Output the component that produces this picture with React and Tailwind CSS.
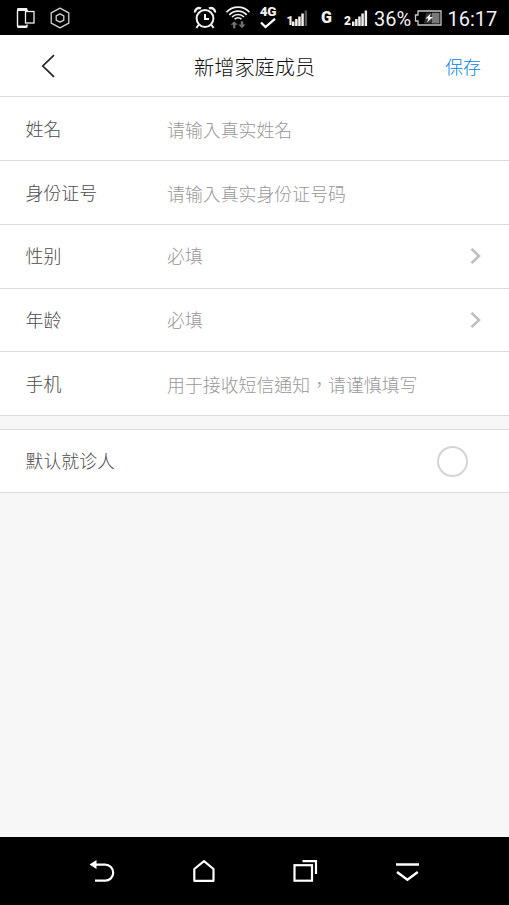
import React from 'react';

const FIELDS = [
  { label: '姓名', hint: '请输入真实姓名', input: true },
  { label: '身份证号', hint: '请输入真实身份证号码', input: true },
  { label: '性别', hint: '必填' },
  { label: '年龄', hint: '必填' },
  { label: '手机', hint: '用于接收短信通知，请谨慎填写', input: true },
];

const SignalBars = ({ dimLast }) => (
  <svg className="w-4 h-4 shrink-0" viewBox="0 0 16 16" fill="#f0f0f0">
    <rect x="0" y="11.5" width="2.5" height="4.5" />
    <rect x="3.1" y="9" width="2.5" height="7" />
    <rect x="6.2" y="6.5" width="2.5" height="9.5" />
    <rect x="9.3" y="3.5" width="2.5" height="12.5" />
    <rect x="12.6" y="0.5" width="2.5" height="15.5" fill={dimLast ? '#555' : '#f0f0f0'} />
  </svg>
);

const StatusBar = () => (
  <div className="h-[35px] shrink-0 bg-black text-[#f2f2f2] flex items-center pl-4 font-['Roboto',sans-serif]">
    {/* Notifications */}
    <svg className="w-5 h-[22px]" viewBox="0 0 20 22" fill="none" stroke="#f2f2f2">
      <path d="M11 4.5V3M11 17.5V19M1.5 3.5V19" strokeWidth="1.4" />
      <path d="M1 4V2.2Q1 1 2.2 1H10.3Q11.5 1 11.5 2.2V4ZM1 18.5H11.5V20Q11.5 21 10.3 21H2.2Q1 21 1 20Z" fill="#f2f2f2" stroke="none" />
      <rect x="9.5" y="4.5" width="8.5" height="11.5" strokeWidth="1.3" />
    </svg>
    <svg className="w-5 h-[22px] ml-[13.5px]" viewBox="0 0 20 22" fill="none" stroke="#d4d4d4" strokeWidth="1.3" strokeLinejoin="round">
      <path d="M10 1.2L18.8 5.8V16.2L10 20.8L1.2 16.2V5.8Z" />
      <path d="M10 6.8L13.8 8.8V13.2L10 15.2L6.2 13.2V8.8Z" />
    </svg>

    {/* Alarm */}
    <svg className="w-6 h-6 ml-[123.5px]" viewBox="0 0 24 24" fill="none" stroke="#f2f2f2" strokeWidth="2">
      <circle cx="12" cy="12.5" r="8.4" />
      <path d="M12 8V13H16M5.5 19L3.4 22M18.5 19L20.6 22" />
      <path d="M2 6.5A4 4 0 0 1 8 2.6M22 6.5A4 4 0 0 0 16 2.6" strokeWidth="2.3" />
    </svg>

    {/* Wifi with the idle transfer arrows */}
    <svg className="w-[26px] h-6 ml-2" viewBox="0 0 26 24" fill="none" stroke="#f2f2f2" strokeWidth="1.7">
      <path d="M1.5 6.3A15.5 15.5 0 0 1 24.5 6.3M4.3 8.8A12 12 0 0 1 21.7 8.8M7 11A8.5 8.5 0 0 1 19 11M9.6 13.2A5 5 0 0 1 16.4 13.2" />
      <path d="M9.2 15.2L5.6 18.8H8V22.2H10.4V18.8H12.8ZM17 22.2L13.4 18.6H15.8V15.2H18.2V18.6H20.6Z" fill="#707070" stroke="none" />
    </svg>

    <div className="w-[18px] ml-2 flex flex-col items-center">
      <span className="text-[13.5px] leading-[11px] font-black tracking-tight">4G</span>
      <svg className="w-4 h-[11px] mt-[1.5px]" viewBox="0 0 16 11" fill="none" stroke="#fff" strokeWidth="2.3">
        <path d="M1 4.5L5.5 9L15 0.8" />
      </svg>
    </div>

    <div className="ml-[9.5px] flex items-end">
      <span className="w-[5.5px] text-[12px] leading-[10px] font-black">1</span>
      <SignalBars dimLast />
    </div>
    <span className="w-[11px] ml-[13px] text-[16px] leading-4 font-black pt-px">G</span>
    <div className="ml-[12px] flex items-end">
      <span className="w-[8px] text-[12px] leading-[10px] font-black">2</span>
      <SignalBars />
    </div>

    <span className="w-[37px] ml-[6px] text-[20px] leading-6 whitespace-nowrap pt-[2px]">36%</span>
    <svg className="w-7 h-4 ml-[3px]" viewBox="0 0 28 16">
      <path d="M4 1H27V15H4V11H1.5V5H4Z" fill="none" stroke="#c8c8c8" strokeWidth="1.3" />
      <rect x="18" y="2.7" width="7.5" height="10.8" fill="#777" />
      <path d="M12 2.7H18V13.5H10Z" fill="#333" />
      <path d="M16.8 3.5L11.5 8.5H14.5L13 12.5L19 7H15.6Z" fill="#fff" />
    </svg>
    <span className="ml-[5.5px] text-[20px] leading-6 pt-[2px]">16:17</span>
  </div>
);

const Header = () => (
  <header className="h-[62.4px] shrink-0 bg-white border-b border-[#dcdcdc] flex items-center pl-[41px] pr-7">
    <svg className="w-[40px] h-6 mt-px" viewBox="0 0 40 24" fill="none" stroke="#222" strokeWidth="1.7">
      <path d="M13 1.2L1.8 12L13 22.8" />
    </svg>
    <h1 className="text-[20.2px] leading-7 text-[#111] font-light ml-[113px] pt-[2px]">新增家庭成员</h1>
    <button className="ml-auto text-[17.9px] leading-7 font-light text-[#0080e0]">保存</button>
  </header>
);

const Field = ({ label, hint, input }) => (
  <div className="h-[63.75px] bg-white border-b border-[#dcdcdc] flex items-center pl-[25.5px] pr-7 font-light text-[17.9px]">
    <span className="w-[141.5px] shrink-0 text-[#4a4a4a] pb-px">{label}</span>
    <span className={`flex-1 text-[#989898] ${input ? 'pt-px' : 'pb-px'}`}>{hint}</span>
    {!input && (
      <svg className="w-[11px] h-4" viewBox="0 0 11 16" fill="none" stroke="#c0c0c0" strokeWidth="2.6">
        <path d="M1.5 0.8L9 8L1.5 15.2" />
      </svg>
    )}
  </div>
);

const NavBar = () => (
  <nav className="h-[68px] shrink-0 bg-black flex items-center justify-center gap-[74px]">
    <svg className="w-7 h-7" viewBox="0 0 28 28" fill="none" stroke="#fff" strokeWidth="2.2">
      <path d="M7 7.7H17.2A8 8 0 0 1 17.2 23.7H7" />
      <path d="M1.5 7.5L8.5 3V12Z" fill="#fff" stroke="none" />
    </svg>
    <svg className="w-7 h-7" viewBox="0 0 28 28" fill="none" stroke="#fff" strokeWidth="2.2" strokeLinejoin="round">
      <path d="M4.3 23.8V12L14 4.2L23.5 12V23.8Z" />
    </svg>
    <svg className="w-7 h-7" viewBox="0 0 28 28" fill="none" stroke="#fff" strokeWidth="2.2">
      <rect x="2.5" y="8.2" width="17.5" height="15.5" />
      <path d="M10.5 4.2H24V17" />
    </svg>
    <svg className="w-7 h-7" viewBox="0 0 28 28" fill="none" stroke="#fff" strokeWidth="2.4">
      <path d="M2 7.5H25M3 15L13.4 22.8L23.8 15" />
    </svg>
  </nav>
);

const App = () => {
  return (
    <div className="w-full h-screen flex flex-col bg-[#f7f7f7] overflow-hidden font-['Noto_Sans_CJK_TC',sans-serif]">
      <StatusBar />
      <Header />
      <main className="flex-1">
        {FIELDS.map((field) => (
          <Field key={field.label} {...field} />
        ))}

        {/* Default patient */}
        <div className="h-[64.3px] mt-[13px] bg-white border-y border-[#dcdcdc] flex items-center justify-between pl-[25.5px] pr-[41px]">
          <span className="text-[17.9px] font-light text-[#4a4a4a] pb-px">默认就诊人</span>
          <span className="w-[31px] h-[31px] mt-px rounded-full border-2 border-[#d4d4d4]" />
        </div>
      </main>
      <NavBar />
    </div>
  );
};

export default App;
